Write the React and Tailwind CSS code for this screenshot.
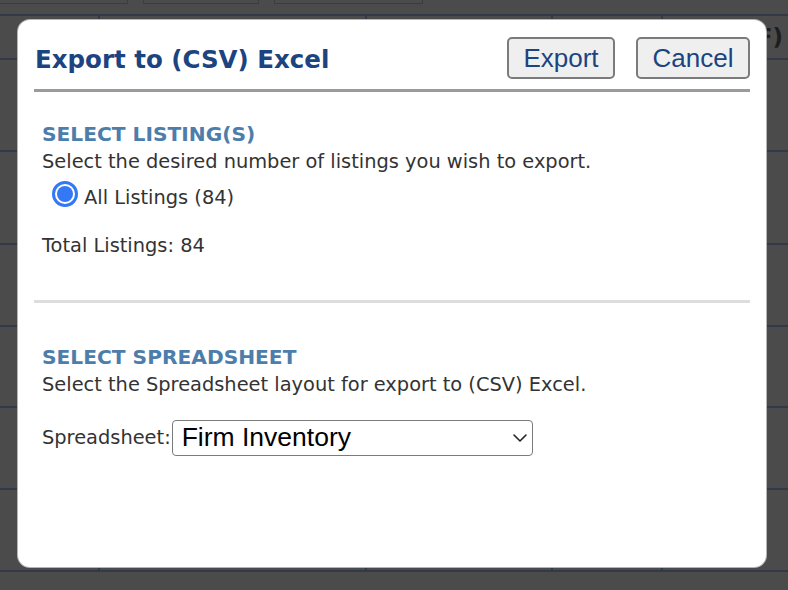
import { ChevronDown } from "lucide-react";

const rowLines = [61, 153, 246, 328, 409, 491, 573];

function BackgroundTable() {
  // dimmed table behind the dialog overlay
  const rows = [];
  let prev = 15;
  for (const y of rowLines) {
    rows.push(y - prev);
    prev = y;
  }
  return (
    <div className="flex flex-col">
      <div className="flex h-[14px] items-start">
        <div className="ml-0 h-[4px] w-[128px] border-b border-r border-[#3c3c3c]" />
        <div className="ml-[15px] h-[4px] w-[116px] border-x border-b border-[#3c3c3c]" />
        <div className="ml-[15px] h-[4px] w-[149px] border-x border-b border-[#3c3c3c]" />
      </div>
      <div className="border-t-2 border-[#333a47]">
        <div className="grid h-[44px] grid-cols-[100px_267px_186px_110px_1fr] border-b-2 border-[#333a47]">
          <div className="border-r-2 border-[#333a47]" />
          <div className="border-r-2 border-[#333a47]" />
          <div className="border-r-2 border-[#333a47]" />
          <div className="border-r-2 border-[#333a47]" />
          <div className="flex items-center justify-end whitespace-nowrap pr-[5px] text-[23px] font-bold text-[#1e1e1e] [font-family:'DejaVu_Sans',sans-serif]">
            F)
          </div>
        </div>
        {rows.slice(1).map((h, i) => (
          <div
            key={i}
            style={{ height: h }}
            className="grid grid-cols-[100px_267px_186px_110px_1fr] border-b-2 border-[#333a47]"
          >
            <div className="border-r-2 border-[#333a47]" />
            <div className="border-r-2 border-[#333a47]" />
            <div className="border-r-2 border-[#333a47]" />
            <div className="border-r-2 border-[#333a47]" />
            <div />
          </div>
        ))}
      </div>
    </div>
  );
}

export default function App() {
  return (
    <div className="relative h-[590px] w-full overflow-hidden bg-[#4b4b4b]">
      <BackgroundTable />

      {/* Dialog */}
      <div className="absolute left-[18px] top-[20px] flex h-[547px] w-[748px] flex-col rounded-[12px] bg-white px-4 shadow-[0_0_0_1px_#b5b5b5]">
        <div className="flex items-center justify-between border-b-[3px] border-[#9b9b9b] pb-[10px] pl-[1px] pt-[17px]">
          <h1 className="mt-[4px] text-[24.5px] font-bold text-[#1b4480] [font-family:'DejaVu_Sans',sans-serif]">
            Export to (CSV) Excel
          </h1>
          <div className="flex gap-[21px]">
            <button className="h-[42px] w-[108px] rounded-[5px] border-2 border-[#7b7b7b] bg-[#efefef] text-[26px] text-[#1b4480] [font-family:'Liberation_Sans',sans-serif]">
              Export
            </button>
            <button className="h-[42px] w-[114px] rounded-[5px] border-2 border-[#7b7b7b] bg-[#efefef] text-[26px] text-[#1b4480] [font-family:'Liberation_Sans',sans-serif]">
              Cancel
            </button>
          </div>
        </div>

        <div className="px-2 pt-[29px] text-[19.4px] text-[#333] [font-family:'DejaVu_Sans',sans-serif]">
          <h2 className="text-[20.2px] font-bold leading-[27px] text-[#4c7dab]">SELECT LISTING(S)</h2>
          <p className="leading-[27px]">Select the desired number of listings you wish to export.</p>
          <label className="mt-[6px] flex items-start gap-[6px] pl-[10px]">
            <span className="flex h-[26px] w-[26px] shrink-0 items-center justify-center rounded-full border-[3px] border-[#3478f6] bg-white">
              <span className="h-[16px] w-[16px] rounded-full bg-[#3478f6]" />
            </span>
            <span className="pt-[4px] leading-[26px]">All Listings (84)</span>
          </label>
          <p className="mt-[21px] leading-[27px]">Total Listings: 84</p>
        </div>

        <div className="mt-[41px] h-[3px] bg-[#dddddd]" />

        <div className="px-2 pt-[41px] text-[19.4px] text-[#333] [font-family:'DejaVu_Sans',sans-serif]">
          <h2 className="text-[20.2px] font-bold leading-[27px] text-[#4c7dab]">SELECT SPREADSHEET</h2>
          <p className="leading-[27px]">Select the Spreadsheet layout for export to (CSV) Excel.</p>
          <div className="mt-[22px] flex items-center gap-[1px]">
            <span>Spreadsheet:</span>
            <div className="flex h-[36px] w-[361px] items-center justify-between rounded-[4px] border border-[#7b7b7b] pl-[9px] pr-0">
              <span className="text-[26.5px] text-black [font-family:'Liberation_Sans',sans-serif]">Firm Inventory</span>
              <ChevronDown size={24} strokeWidth={1.6} className="text-[#222]" />
            </div>
          </div>
        </div>
      </div>
    </div>
  );
}
